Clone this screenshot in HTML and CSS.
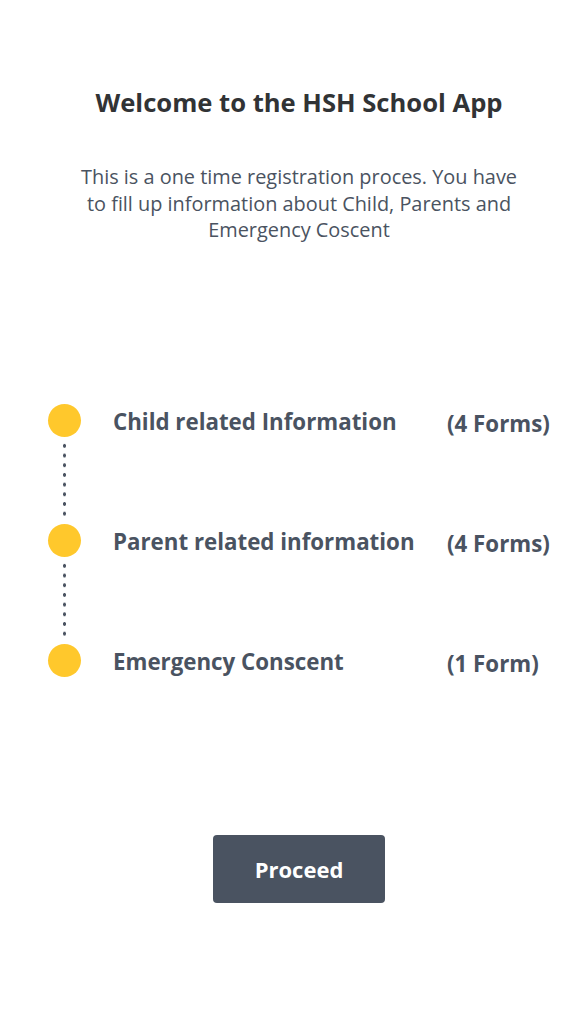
FILE: index.html
```html
<!DOCTYPE html>
<html lang="en-US">
	<head>
		<title>HSH School App - Welcome</title>
		<link rel="stylesheet" href="styles.css">
	</head>
	<body>
		<div class="welcome">
			<h1 class="welcome-title">Welcome to the HSH School App</h1>
			<p class="welcome-text">This is a one time registration proces. You have to fill up information about Child, Parents and Emergency Coscent</p>

			<div class="steps">
				<span class="step-dot"></span>
				<span class="step-name">Child related Information</span>
				<span class="step-count">(4 Forms)</span>

				<span class="step-line"></span>

				<span class="step-dot"></span>
				<span class="step-name">Parent related information</span>
				<span class="step-count">(4 Forms)</span>

				<span class="step-line"></span>

				<span class="step-dot"></span>
				<span class="step-name">Emergency Conscent</span>
				<span class="step-count">(1 Form)</span>
			</div>

			<button class="proceed">Proceed</button>
		</div>
	</body>
</html>
```

FILE: styles.css
```css
* {
	font-family: "Open Sans", "Noto Sans", sans-serif;
	box-sizing: border-box;
}

body {
	margin: 0;
	background: white;
}

.welcome {
	display: flex;
	flex-direction: column;
	align-items: center;
	padding-top: 85px;
	padding-left: 11px;
}

.welcome-title {
	margin: 0;
	font-size: 25.6px;
	font-weight: 700;
	color: #313335;
	text-align: center;
}

.welcome-text {
	margin: 44px 0 0;
	width: 446px;
	font-size: 19.9px;
	line-height: 26.5px;
	color: #4a5361;
	text-align: center;
}

.steps {
	align-self: stretch;
	margin-top: 160px;
	padding-left: 37px;
	display: grid;
	grid-template-columns: 65px 334px auto;
	align-items: center;
	color: #4a5361;
}

.step-dot {
	width: 33px;
	height: 33px;
	border-radius: 50%;
	background: #ffc82c;
}

.step-name {
	font-size: 22.3px;
	line-height: 29px;
	font-weight: 700;
	margin-top: 3px;
}

.step-count {
	font-size: 22.3px;
	line-height: 24px;
	font-weight: 700;
	margin-top: 8px;
}

.step-line {
	grid-column: 1 / -1;
	width: 33px;
	height: 78px;
	margin: 4px 0 5px;
	background-image: radial-gradient(circle, #4a5361 1.5px, transparent 2px);
	background-size: 33px 9.7px;
	background-position: center top;
}

.proceed {
	margin-top: 158px;
	width: 172px;
	height: 68px;
	border: 0;
	border-radius: 4px;
	background: #4a5361;
	color: white;
	font-size: 22px;
	font-weight: 700;
	cursor: pointer;
}
```
